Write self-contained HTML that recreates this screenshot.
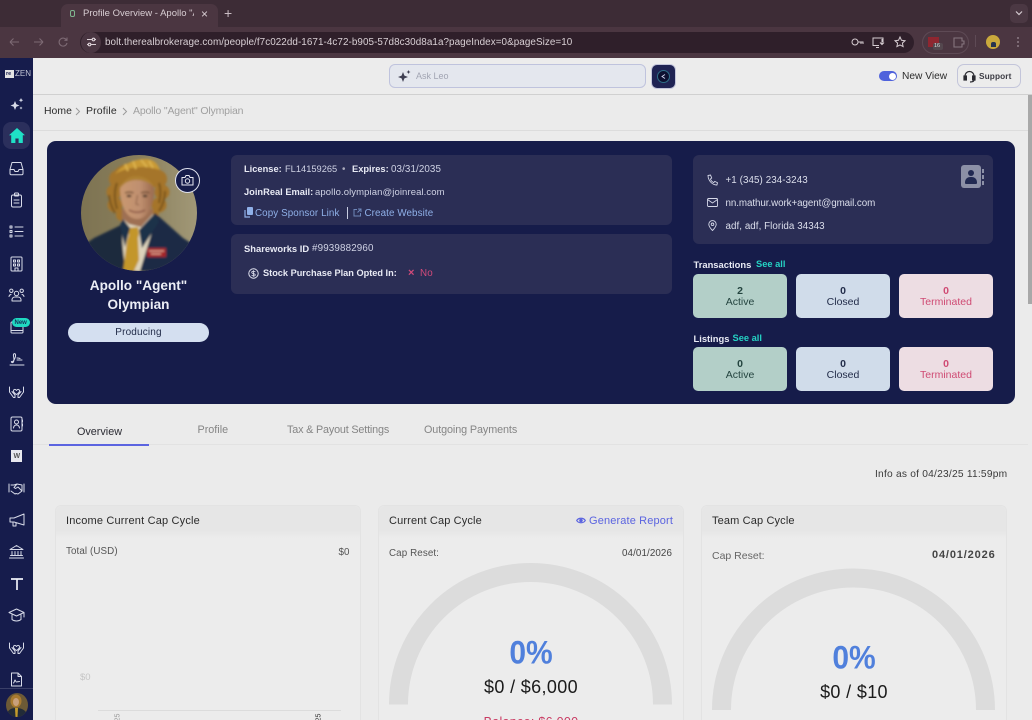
<!DOCTYPE html>
<html><head><meta charset="utf-8">
<style>
html,body{margin:0;padding:0;width:1032px;height:720px;overflow:hidden}
body{position:relative;background:#ebebeb;font-family:"Liberation Sans",sans-serif}
#w{position:absolute;left:0;top:0;width:1032px;height:720px;overflow:hidden;background:#ebebeb;filter:blur(.3px)}
.a{position:absolute}
.t{position:absolute;white-space:nowrap;line-height:1}
.b{font-weight:bold}
.tile{position:absolute;width:94px;height:44px;border-radius:5px;text-align:center;font-size:10.5px;line-height:11px;box-sizing:border-box;padding-top:12px}
.tile b{display:block;font-size:10.5px}
.g{background:#b3cfc8;color:#24443f}.bl{background:#d0dcea;color:#232d4a}.r{background:#eddde3;color:#cf4a73}
.card{position:absolute;top:505px;height:215px;border:1px solid #e3e3e3;border-bottom:0;border-radius:6px 6px 0 0;box-sizing:border-box;background:#ececec}
.card i{display:block;height:32px;border-radius:6px 6px 0 0;background:linear-gradient(#e6e6e6,#e6e6e6 75%,#ececec)}
svg.ic{position:absolute;fill:none;stroke:#d8dbe9;stroke-width:1;stroke-linecap:round;stroke-linejoin:round}
.big{font-weight:bold;font-size:30px;color:#5080dc;text-align:center;width:306px;transform:scaleY(1.08)}
</style></head><body><div id="w">

<!-- browser chrome -->
<div class="a" style="left:0;top:0;width:1032px;height:27px;background:#3d2c36"></div>
<div class="a" style="left:0;top:27px;width:1032px;height:31px;background:#4b3641"></div>
<div class="a" style="left:61px;top:4px;width:157px;height:23px;background:#4b3641;border-radius:7px 7px 0 0"></div>
<div class="a" style="left:70px;top:10px;width:5px;height:7px;border:1px solid #7fb58f;border-radius:2px;box-sizing:border-box"></div>
<span class="t" style="left:83px;top:8.5px;font-size:9.5px;color:#d8ced3;width:111px;overflow:hidden">Profile Overview - Apollo "Ag</span>
<span class="t" style="left:201px;top:7.5px;font-size:12px;color:#d8ced3">×</span>
<span class="t" style="left:224px;top:6px;font-size:14px;color:#c9bcc3">+</span>
<div class="a" style="left:1010px;top:4px;width:18px;height:19px;background:#4b3843;border-radius:5px"></div>
<svg class="a" style="left:1015px;top:10px" width="8" height="6" fill="none" stroke="#d5cbd0" stroke-width="1.2"><path d="M1 1.5l3 3 3-3"/></svg>
<svg class="a" style="left:9px;top:36px" width="60" height="12" fill="none" stroke="#7d6a74" stroke-width="1.1"><path d="M1 6h9M1 6l3.5-3.5M1 6l3.5 3.5M25 6h9M34 6l-3.5-3.5M34 6l-3.5 3.5"/><path d="M57.5 4a4 4 0 1 0 .5 3M58 1.5V4.3h-2.6"/></svg>
<div class="a" style="left:80px;top:32px;width:834px;height:21px;background:#2f1f2a;border-radius:11px"></div>
<div class="a" style="left:81px;top:32px;width:20px;height:21px;background:#4a3642;border-radius:50%"></div>
<svg class="a" style="left:86px;top:37px" width="11" height="10" fill="none" stroke="#ddd2d8" stroke-width="1.1"><path d="M1 2.5h5M9 2.5h1M1 7.5h1M5 7.5h5"/><circle cx="7.5" cy="2.5" r="1.3"/><circle cx="3.5" cy="7.5" r="1.3"/></svg>
<span class="t" style="left:105px;top:37.5px;font-size:9.9px;color:#d9d0d5;letter-spacing:.06px">bolt.therealbrokerage.com/people/f7c022dd-1671-4c72-b905-57d8c30d8a1a?pageIndex=0&amp;pageSize=10</span>
<svg class="a" style="left:850px;top:35px" width="60" height="14" fill="none" stroke="#d6ccd1" stroke-width="1"><circle cx="5" cy="7" r="3"/><path d="M8 7h5v2M11 7v2"/><path d="M29 10.5h-6V3h10v4M26 12.5h3M32 4v5M30 7.5l2 2 2-2"/><path d="M50 2l1.5 3.3 3.5.4-2.6 2.4.7 3.5L50 9.9l-3.1 1.7.7-3.5L45 5.7l3.5-.4z"/></svg>
<div class="a" style="left:922px;top:31px;width:47px;height:23px;border:1px solid #5e4a55;border-radius:12px;box-sizing:border-box"></div>
<div class="a" style="left:928px;top:37px;width:11px;height:10px;background:#8f2630"></div>
<div class="a" style="left:933px;top:43px;width:10px;height:7px;background:#54474e;border-radius:2px"></div>
<span class="t" style="left:934px;top:44px;font-size:5.5px;color:#ddd">16</span>
<svg class="a" style="left:952px;top:36px" width="13" height="12" fill="none" stroke="#86757e" stroke-width="1.1"><path d="M2 2h8v3h2v3h-2v3H2z"/></svg>
<div class="a" style="left:975px;top:35px;width:1px;height:12px;background:#5e4a55"></div>
<div class="a" style="left:986px;top:35px;width:14px;height:14px;border-radius:50%;background:#c9a93c"></div>
<div class="a" style="left:990.5px;top:42px;width:5px;height:5px;border-radius:2px 2px 0 0;background:#26344f"></div>
<div class="a" style="left:1017px;top:37px;width:2px;height:2px;background:#8d7b85;box-shadow:0 4px #8d7b85,0 8px #8d7b85;border-radius:50%"></div>

<!-- top bar -->
<div class="a" style="left:33px;top:58px;width:999px;height:37px;background:#ececec;border-bottom:1px solid #d0d0d0;box-sizing:border-box"></div>
<div class="a" style="left:389px;top:64px;width:257px;height:24px;background:#e4e7ee;border:1px solid #bfc3dd;border-radius:6px;box-sizing:border-box"></div>
<svg class="a" style="left:397px;top:69px" width="14" height="14" fill="#3f3f52"><path d="M6 3l1.4 3.6L11 8 7.4 9.4 6 13 4.6 9.4 1 8l3.6-1.4z"/><path d="M11.5 1l.6 1.4 1.4.6-1.4.6-.6 1.4-.6-1.4L9.5 3l1.4-.6z"/></svg>
<span class="t" style="left:416px;top:71.5px;font-size:9px;color:#a2a5b3">Ask Leo</span>
<div class="a" style="left:651px;top:64px;width:25px;height:25px;background:#1f2353;border-radius:6px;border:1px solid #c3c5da;box-sizing:border-box"></div>
<div class="a" style="left:657px;top:70px;width:13px;height:13px;border-radius:50%;background:#0d1030;border:1px solid #2e6f88;box-sizing:border-box"></div>
<svg class="a" style="left:660px;top:73px" width="7" height="7" fill="none" stroke="#cfd4ee" stroke-width=".9"><path d="M5 1.5L2 3.5 5 5.5"/></svg>
<div class="a" style="left:879px;top:71px;width:18px;height:10px;background:#4f62dc;border-radius:5px"></div>
<div class="a" style="left:889px;top:72.5px;width:7px;height:7px;background:#fff;border-radius:50%"></div>
<span class="t" style="left:902px;top:72px;font-size:10.2px;color:#2c2c2c">New View</span>
<div class="a" style="left:957px;top:64px;width:64px;height:24px;border:1px solid #c3c5da;border-radius:7px;box-sizing:border-box"></div>
<svg class="a" style="left:963px;top:70px" width="13" height="13" fill="none" stroke="#2a2a30" stroke-width="1.2"><path d="M2 8V6a4.5 4.5 0 0 1 9 0v2"/><rect x="1" y="6" width="2.4" height="4" fill="#2a2a30"/><rect x="9.6" y="6" width="2.4" height="4" fill="#2a2a30"/><path d="M11 10c0 1.5-2 2-4 2"/></svg>
<span class="t b" style="left:979px;top:71.5px;font-size:8.3px;color:#3c3c44;letter-spacing:.1px">Support</span>

<!-- scrollbar -->
<div class="a" style="left:1028px;top:95px;width:4px;height:209px;background:#a8a8a8"></div>

<!-- breadcrumbs -->
<div class="a" style="left:33px;top:130px;width:995px;height:1px;background:#dcdcdc"></div>
<span class="t" style="left:44px;top:107px;font-size:10.4px;color:#2b2b2b;letter-spacing:.05px">Home</span>
<svg class="a" style="left:75px;top:107px" width="6" height="9" fill="none" stroke="#9a9a9a"><path d="M1 1l3.5 3.5L1 8"/></svg>
<span class="t" style="left:86px;top:106px;font-size:10.5px;color:#2b2b2b;letter-spacing:.15px">Profile</span>
<svg class="a" style="left:122px;top:107px" width="6" height="9" fill="none" stroke="#9a9a9a"><path d="M1 1l3.5 3.5L1 8"/></svg>
<span class="t" style="left:133px;top:106px;font-size:10.5px;color:#a0a0a0;letter-spacing:-.17px">Apollo "Agent" Olympian</span>

<!-- sidebar -->
<div class="a" style="left:0;top:58px;width:33px;height:662px;background:#161c4c"></div>
<div class="a" style="left:5px;top:70px;width:9px;height:8px;background:#e3e3e3"></div>
<span class="t b" style="left:6px;top:71.5px;font-size:5.5px;color:#161c4c">re</span>
<span class="t" style="left:15px;top:70px;font-size:8px;color:#c3c6d6">ZEN</span>
<svg class="ic" style="left:10px;top:97px" width="14" height="14"><path fill="#d8dbe9" stroke="none" d="M5 4l1.3 3.2L9.5 8.5 6.3 9.8 5 13 3.7 9.8.5 8.5l3.2-1.3zM11 1l.7 1.5 1.500.7-1.500.7L11 5.400l-.7-1.500-1.500-.7 1.500-.7zM11 9.500l.5 1 1 .5-1 .5-.5 1-.5-1-1-.5 1-.5z"/></svg>
<div class="a" style="left:3px;top:122px;width:27px;height:27px;border-radius:8px;background:#2b2f5c"></div>
<svg class="a" style="left:9px;top:128px" width="16" height="15" fill="#1fe0c6"><path d="M8 0L0 7.2h2.2V15h4.2v-4.5h3.2V15h4.2V7.2H16z"/></svg>
<svg class="ic" style="left:9px;top:161px" width="15" height="15"><path d="M3 1.500h9l2 7v4a1.200 1.200 0 0 1-1.200 1.200H2.200A1.200 1.200 0 0 1 1 12.500v-4zM1 8.500h4l1 2h3l1-2h4"/></svg>
<svg class="ic" style="left:10px;top:192px" width="13" height="16"><rect x="1.500" y="3" width="10" height="12" rx="1.500"/><rect x="4.500" y="1" width="4" height="3" rx=".8"/><path d="M4 8h5M4 11h5"/></svg>
<svg class="ic" style="left:9px;top:225px" width="15" height="13"><path d="M6 2h8M6 6.500h8M6 11h8"/><rect x="1" y="1" width="2" height="2"/><rect x="1" y="5.500" width="2" height="2"/><rect x="1" y="10" width="2" height="2"/></svg>
<svg class="ic" style="left:10px;top:256px" width="13" height="16"><rect x="1" y="1" width="11" height="14" rx="1"/><path d="M3.500 4h2v2h-2zM7.500 4h2v2h-2zM3.500 8h2v2h-2zM7.500 8h2v2h-2zM5 15v-3h3v3"/></svg>
<svg class="ic" style="left:8px;top:288px" width="17" height="14"><circle cx="8.500" cy="5.500" r="2.200"/><circle cx="3.300" cy="2.800" r="1.700"/><circle cx="13.700" cy="2.800" r="1.700"/><path d="M4 13v-1.500a3 3 0 0 1 3-2.500h3a3 3 0 0 1 3 2.500V13zM1 8.500a2.500 2.500 0 0 1 2-2M16 8.500a2.500 2.500 0 0 0-2-2"/></svg>
<svg class="ic" style="left:10px;top:320px" width="15" height="14"><rect x="1" y="2" width="12" height="11" rx="1"/><path d="M1 10.500h12"/></svg>
<div class="a" style="left:12px;top:318px;width:18px;height:9px;background:#1fd9c1;border-radius:5px"></div>
<span class="t b" style="left:14.500px;top:319.500px;font-size:6px;color:#15305a">New</span>
<svg class="ic" style="left:9px;top:352px" width="16" height="14"><path d="M1 13h14M3 10c2-1 4-5 3.500-7.500C6 1 4 1.500 4.500 4c.5 2.500 1 5.500-.5 6.500-1 .5-2-.5-1.500-1M8 8h5M8 6c1 0 2 0 3 .5"/></svg>
<svg class="ic" style="left:8px;top:385px" width="17" height="14"><path d="M8.500 5.500C7.500 4 5.500 4 5.500 6c0 1.500 3 3.500 3 3.500s3-2 3-3.500c0-2-2-2-3-.5zM1.500 2v5l4 5.500h1.500V10L4 6.500M15.500 2v5l-4 5.500H10V10l3-3.500"/></svg>
<svg class="ic" style="left:10px;top:416px" width="14" height="16"><rect x="1" y="1" width="11" height="14" rx="1.500"/><circle cx="6.500" cy="6" r="2"/><path d="M3.500 12c.3-2 1.500-3 3-3s2.700 1 3 3M12.500 4v2M12.500 8v2"/></svg>
<div class="a" style="left:11px;top:450px;width:11px;height:12px;background:#e8e8ee"></div>
<span class="t b" style="left:13.500px;top:452.500px;font-size:7px;color:#555">W</span>
<svg class="ic" style="left:8px;top:482px" width="17" height="13"><path d="M1 2v8M16 2v8M3 3h3l3-1 5 1M3 9l4 3 1-.5 2 .5 4-3V3M9 2L6 5.500l1.500 1L10 5l3.500 3.500"/></svg>
<svg class="ic" style="left:9px;top:513px" width="16" height="14"><path d="M15 1v11L5 9H1V5h4zM4 9v4h3V10"/></svg>
<svg class="ic" style="left:9px;top:544px" width="15" height="15"><path d="M1 5.500L7.500 1.500l6.500 4zM1.500 5.500h12M3 7.500v4M6 7.500v4M9 7.500v4M12 7.500v4M1.500 11.500h12M.5 14h14"/></svg>
<svg class="a" style="left:10px;top:577px" width="14" height="13" fill="none" stroke="#eef0f8" stroke-width="1.700"><path d="M1 2h12M7 2v11"/></svg>
<svg class="ic" style="left:8px;top:608px" width="17" height="14"><path d="M8.500 1L16 4.500 8.500 8 1 4.500zM4 6.500v5c2.500 2 6.500 2 9 0v-5M16 4.500V9"/></svg>
<svg class="ic" style="left:8px;top:641px" width="17" height="14"><path d="M8.500 5.500C7.500 4 5.500 4 5.500 6c0 1.500 3 3.500 3 3.500s3-2 3-3.500c0-2-2-2-3-.5zM1.500 2v5l4 5.500h1.500V10L4 6.500M15.500 2v5l-4 5.500H10V10l3-3.500"/></svg>
<svg class="ic" style="left:10px;top:672px" width="13" height="15"><path d="M1.500 1h6.500l3.500 3.500V14h-10zM8 1v3.500h3.500M3.500 11c1-.5 1-3 1.500-3s.5 2 1.500 2 1.500-.5 3-.5"/></svg>
<div class="a" style="left:0;top:688px;width:33px;height:1px;background:#3a3f68"></div>
<svg class="a" style="left:6px;top:693px" width="22" height="24" viewBox="0 0 22 24"><defs><clipPath id="av"><ellipse cx="11" cy="12" rx="11" ry="12"/></clipPath></defs><g clip-path="url(#av)"><rect width="22" height="24" fill="#6d5a36"/><ellipse cx="10" cy="8" rx="5.500" ry="6.500" fill="#a97a30"/><ellipse cx="10" cy="9" rx="3" ry="4" fill="#c9a07c"/><path d="M0 24c1-7 5-9 10-9s11 2 12 9z" fill="#222b38"/><path d="M9 15h3l-.5 9h-2z" fill="#c49b2c"/></g></svg>

<!-- hero -->
<div class="a" style="left:47px;top:141px;width:968px;height:263px;background:#161c4a;border-radius:9px"></div>

<!-- avatar -->
<svg class="a" style="left:81px;top:155px" width="116" height="116" viewBox="0 0 116 116">
<defs><clipPath id="c"><circle cx="58" cy="58" r="58"/></clipPath>
<linearGradient id="bg" x1="0" x2="1"><stop offset="0" stop-color="#7d7352"/><stop offset=".5" stop-color="#8a7f5c"/><stop offset="1" stop-color="#a19877"/></linearGradient>
<linearGradient id="fc" x1="0" x2="1"><stop offset="0" stop-color="#c9986f"/><stop offset=".6" stop-color="#bf8f6f"/><stop offset="1" stop-color="#9a6a4e"/></linearGradient>
<filter id="s"><feGaussianBlur stdDeviation="1"/></filter></defs>
<g clip-path="url(#c)">
<rect width="116" height="116" fill="url(#bg)"/>
<g filter="url(#s)">
<g fill="#a5752a">
<circle cx="37" cy="24" r="9"/><circle cx="33" cy="37" r="7.500"/><circle cx="34" cy="50" r="7.500"/><circle cx="41" cy="60" r="6"/>
<circle cx="77" cy="24" r="9"/><circle cx="81" cy="37" r="7.500"/><circle cx="78" cy="50" r="7.500"/><circle cx="73" cy="58" r="5"/>
<ellipse cx="57" cy="21" rx="25" ry="14"/>
</g>
<path d="M28 40c1 6 2 12 6 18M36 28c-3 8-3 16 0 26M84 36c0 8-2 14-6 20M78 28c2 6 2 12 0 20" stroke="#7a551c" stroke-width="2" fill="none"/>
<path d="M34 19C42 9 53 4 65 4c6 0 11 3 14 11-14-5-31-4-45 4z" fill="#c99a36"/>
<path d="M60 5l6 7M68 6l4 7M52 6l3 8M44 9l3 7" stroke="#dcb24e" stroke-width="2"/>
<path d="M41 54h31v16c-6 6-23 6-31 0z" fill="#9e7053"/>
<path d="M39 34c0-6 8-10 17-10s17 4 17 11c0 15-6 29-17 29S39 49 39 34z" fill="url(#fc)"/>
<path d="M39 34c3-6 10-9 16-9 8 0 15 3 18 8-2-7-9-12-18-12-8 0-14 5-16 13z" fill="#ad8030"/>
<path d="M44 38c3-1.200 6-1.200 8.500 0M60 38c3-1.200 6-1.200 8.500 0" stroke="#6f4d36" stroke-width="1.300" fill="none"/>
<ellipse cx="48" cy="41" rx="2.400" ry="1.200" fill="#4b382c"/><ellipse cx="64" cy="41" rx="2.400" ry="1.200" fill="#4b382c"/>
<path d="M56.500 40l-1.500 9 3 1" stroke="#966a50" stroke-width="1.200" fill="none"/>
<path d="M48 55c5 3 11 3 16 0" stroke="#8a5544" stroke-width="1.600" fill="none"/>
<path d="M0 116V92l13-9 29-14 15 47z" fill="#1d2c3d"/>
<path d="M116 116V92l-14-9-28-25-20 58z" fill="#1a2b44"/>
<path d="M42 64l6 5 12 3 12-13 2 8-15 49H45c-3-16-5-36-3-52z" fill="#ddd3bb"/>
<path d="M47 73l10-1 1 7-1 4 1 22-5 11H42l4-30 2-6z" fill="#c3962c"/>
<path d="M42 64l-3 6 5 22 5-19zM74 58l4 9-17 26-3-18z" fill="#1f3049"/>
<rect x="66" y="93" width="19" height="9" fill="#a6272c"/>
<path d="M68 96h15M70 99h10" stroke="#e7b5a0" stroke-width="1"/>
</g></g></svg>
<div class="a" style="left:175px;top:168px;width:25px;height:25px;border:1px solid #dfe1ee;border-radius:50%;background:#161c4a;box-sizing:border-box"></div>
<svg class="a" style="left:181px;top:174px" width="13" height="12" fill="none" stroke="#e8e9f2" stroke-width="1"><path d="M1 3.500h3l1-2h3l1 2h3v7.500H1z"/><circle cx="6.500" cy="7" r="2.200"/></svg>
<span class="t b" style="left:0;width:277px;text-align:center;top:278.500px;font-size:13.600px;color:#eceef6">Apollo "Agent"</span>
<span class="t b" style="left:0;width:277px;text-align:center;top:297.500px;font-size:13.600px;color:#eceef6">Olympian</span>
<div class="a" style="left:68px;top:323px;width:141px;height:19px;background:#d4dff0;border-radius:10px"></div>
<span class="t" style="left:68px;width:141px;text-align:center;top:327.500px;font-size:10px;color:#232d4a;letter-spacing:.15px">Producing</span>

<!-- info panels -->
<div class="a" style="left:231px;top:155px;width:441px;height:70px;background:#2b2e55;border-radius:6px"></div>
<div class="a" style="left:231px;top:234px;width:441px;height:60px;background:#2b2e55;border-radius:6px"></div>
<div class="a" style="left:693px;top:155px;width:300px;height:89px;background:#2b2e55;border-radius:6px"></div>

<span class="t b" style="left:244px;top:165px;font-size:9.300px;color:#e8eaf4">License:</span>
<span class="t" style="left:285px;top:165px;font-size:9.300px;color:#cfd2e4">FL14159265</span>
<span class="t" style="left:342px;top:165px;font-size:9.800px;color:#aab">•</span>
<span class="t b" style="left:352px;top:165px;font-size:9.300px;color:#e8eaf4">Expires:</span>
<span class="t" style="left:391px;top:165px;font-size:9.800px;color:#cfd2e4;letter-spacing:.1px">03/31/2035</span>
<span class="t b" style="left:244px;top:188px;font-size:9.300px;color:#e8eaf4">JoinReal Email:</span>
<span class="t" style="left:315px;top:188px;font-size:9.500px;color:#cfd2e4;letter-spacing:.1px">apollo.olympian@joinreal.com</span>
<svg class="a" style="left:244px;top:207px" width="9" height="11" fill="#8fb0e8"><rect x="3" y="0" width="6" height="8" rx="1"/><path d="M1 3v7h5" fill="none" stroke="#8fb0e8" stroke-width="1.200"/></svg>
<span class="t" style="left:255px;top:209px;font-size:9.800px;color:#8fb0e8;letter-spacing:.1px">Copy Sponsor Link</span>
<div class="a" style="left:347px;top:207px;width:1px;height:12px;background:#c8cce0"></div>
<svg class="a" style="left:353px;top:208px" width="9" height="9" fill="none" stroke="#6e86b8"><path d="M4 1.500H1v6.500h6.500V5M5 1h3v3M8 1L4.500 4.500"/></svg>
<span class="t" style="left:364.500px;top:209px;font-size:9.800px;color:#8fb0e8;letter-spacing:.1px">Create Website</span>
<span class="t b" style="left:244px;top:243.500px;font-size:9.400px;color:#e8eaf4">Shareworks ID</span>
<span class="t" style="left:312px;top:243.500px;font-size:9.800px;color:#cfd2e4;letter-spacing:.15px">#9939882960</span>
<svg class="a" style="left:248px;top:268px" width="11" height="11" fill="none" stroke="#dfe1ee"><circle cx="5.500" cy="5.500" r="4.700"/><path d="M7.300 4c-.5-1-3.600-1.200-3.600.4 0 1.700 3.600 .8 3.600 2.600 0 1.400-3.100 1.200-3.700 0M5.500 2.300v6.400" stroke-width=".8"/></svg>
<span class="t b" style="left:263px;top:269px;font-size:9.200px;color:#e8eaf4">Stock Purchase Plan Opted In:</span>
<span class="t b" style="left:408px;top:268px;font-size:11px;color:#d24a7a">×</span>
<span class="t" style="left:420px;top:269px;font-size:9.800px;color:#d24a7a;letter-spacing:.2px">No</span>

<svg class="a" style="left:707px;top:174px" width="11" height="12" fill="none" stroke="#d5d8e8" stroke-width=".9"><path d="M1 1.500l2.500-.5 1.200 3-1.300 1c.6 1.600 1.700 2.800 3.300 3.600l1.100-1.200 2.700 1.300-.6 2.300C5 11 1.200 6.500 1 1.500z"/></svg>
<span class="t" style="left:725.500px;top:175.500px;font-size:9.800px;color:#dcdfec;letter-spacing:.08px">+1 (345) 234-3243</span>
<svg class="a" style="left:707px;top:198px" width="11" height="9" fill="none" stroke="#d5d8e8" stroke-width=".9"><rect x=".5" y=".5" width="10" height="8" rx="1"/><path d="M.5 1.500l5 3.500 5-3.500"/></svg>
<span class="t" style="left:725.500px;top:198.500px;font-size:9.800px;color:#dcdfec;letter-spacing:-.07px">nn.mathur.work+agent@gmail.com</span>
<svg class="a" style="left:708px;top:220px" width="9" height="11" fill="none" stroke="#d5d8e8" stroke-width=".9"><path d="M4.500 10.500C2 8 .8 6 .8 4.300a3.700 3.700 0 0 1 7.400 0C8.200 6 7 8 4.500 10.500z"/><circle cx="4.500" cy="4.300" r="1.300"/></svg>
<span class="t" style="left:725.500px;top:221.500px;font-size:9.800px;color:#dcdfec;letter-spacing:.05px">adf, adf, Florida 34343</span>
<div class="a" style="left:961px;top:165px;width:20px;height:23px;background:#8c90a6;border-radius:3px"></div>
<div class="a" style="left:968px;top:170px;width:6px;height:6px;background:#222a52;border-radius:50%"></div>
<div class="a" style="left:965px;top:177px;width:12px;height:7px;background:#222a52;border-radius:5px 5px 1px 1px"></div>
<div class="a" style="left:981.500px;top:169px;width:2px;height:4px;background:#8c90a6;box-shadow:0 6px #8c90a6,0 12px #8c90a6"></div>

<span class="t b" style="left:693.500px;top:260px;font-size:9.400px;color:#e8eaf4">Transactions</span>
<span class="t b" style="left:756px;top:260px;font-size:9.300px;color:#25d3c4">See all</span>
<div class="tile g" style="left:693px;top:274px"><b>2</b>Active</div>
<div class="tile bl" style="left:796px;top:274px"><b>0</b>Closed</div>
<div class="tile r" style="left:899px;top:274px"><b>0</b>Terminated</div>
<span class="t b" style="left:693.500px;top:333.500px;font-size:9.400px;color:#e8eaf4">Listings</span>
<span class="t b" style="left:732.500px;top:333.500px;font-size:9.300px;color:#25d3c4">See all</span>
<div class="tile g" style="left:693px;top:347px"><b>0</b>Active</div>
<div class="tile bl" style="left:796px;top:347px"><b>0</b>Closed</div>
<div class="tile r" style="left:899px;top:347px"><b>0</b>Terminated</div>

<!-- tabs -->
<div class="a" style="left:33px;top:444px;width:995px;height:1px;background:#e2e2e2"></div>
<div class="a" style="left:49px;top:444px;width:100px;height:2px;background:#5b64e0"></div>
<span class="t" style="left:77px;top:427px;font-size:10.800px;color:#2b2b33">Overview</span>
<span class="t" style="left:197.500px;top:425px;font-size:10.800px;color:#858585">Profile</span>
<span class="t" style="left:287px;top:425px;font-size:10.800px;color:#858585;letter-spacing:-.17px">Tax &amp; Payout Settings</span>
<span class="t" style="left:424px;top:425px;font-size:10.800px;color:#858585;letter-spacing:-.1px">Outgoing Payments</span>
<span class="t" style="left:875px;top:470px;font-size:10.200px;color:#3a3a3a;letter-spacing:.23px">Info as of 04/23/25 11:59pm</span>

<!-- cards -->
<div class="card" style="left:55px;width:306px"><i></i></div>
<div class="card" style="left:378px;width:306px"><i></i></div>
<div class="card" style="left:701px;width:306px"><i></i></div>

<span class="t" style="left:66px;top:516px;font-size:11px;color:#2b2b2b;letter-spacing:.18px">Income Current Cap Cycle</span>
<span class="t" style="left:66px;top:547px;font-size:9.800px;color:#555;letter-spacing:.1px">Total (USD)</span>
<span class="t" style="left:338.500px;top:548px;font-size:9.800px;color:#555">$0</span>
<span class="t" style="left:80px;top:672.500px;font-size:9.500px;color:#c5c5c5">$0</span>
<div class="a" style="left:98px;top:710px;width:243px;height:1px;background:#dcdcdc"></div>
<span class="t" style="left:114px;top:714px;font-size:7px;color:#999;transform:rotate(-90deg)">25</span>
<span class="t" style="left:315px;top:714px;font-size:7px;color:#333;transform:rotate(-90deg)">25</span>

<span class="t" style="left:389px;top:516px;font-size:11px;color:#2b2b2b;letter-spacing:.14px">Current Cap Cycle</span>
<svg class="a" style="left:576px;top:516px" width="10" height="9" fill="none" stroke="#5b64e0" stroke-width="1.200"><path d="M.7 4.500C2.500 1.500 7.500 1.500 9.300 4.500 7.500 7.500 2.500 7.500.7 4.500z"/><circle cx="5" cy="4.500" r="1.200" fill="#5b64e0"/></svg>
<span class="t" style="left:589px;top:516px;font-size:11px;color:#5b64e0;letter-spacing:.14px">Generate Report</span>
<span class="t" style="left:389px;top:549px;font-size:9.800px;color:#555;letter-spacing:.1px">Cap Reset:</span>
<span class="t" style="left:622px;top:549px;font-size:9.800px;color:#444;letter-spacing:.1px">04/01/2026</span>
<svg class="a" style="left:380px;top:555px" width="300" height="165" fill="none" stroke="#dcdcdc" stroke-width="19"><path d="M18.500 149.500a132 132 0 0 1 264 0"/></svg>
<span class="t big" style="left:378px;top:639px">0%</span>
<span class="t" style="left:378px;width:306px;text-align:center;top:678px;font-size:18px;color:#1a1a1a;letter-spacing:.35px">$0 / $6,000</span>
<span class="t" style="left:378px;width:306px;text-align:center;top:716px;font-size:12.500px;color:#c93a62;letter-spacing:.3px">Balance: $6,000</span>

<span class="t" style="left:712px;top:516px;font-size:11px;color:#2b2b2b;letter-spacing:.14px">Team Cap Cycle</span>
<span class="t" style="left:712px;top:551px;font-size:10.500px;color:#666">Cap Reset:</span>
<span class="t b" style="left:932px;top:550px;font-size:11px;color:#444;letter-spacing:.85px">04/01/2026</span>
<svg class="a" style="left:703px;top:560px" width="300" height="160" fill="none" stroke="#dcdcdc" stroke-width="19"><path d="M18.500 150a132 132 0 0 1 264 0"/></svg>
<span class="t big" style="left:701px;top:644px">0%</span>
<span class="t" style="left:701px;width:306px;text-align:center;top:683px;font-size:18px;color:#1a1a1a;letter-spacing:.35px">$0 / $10</span>
</div></body></html>
